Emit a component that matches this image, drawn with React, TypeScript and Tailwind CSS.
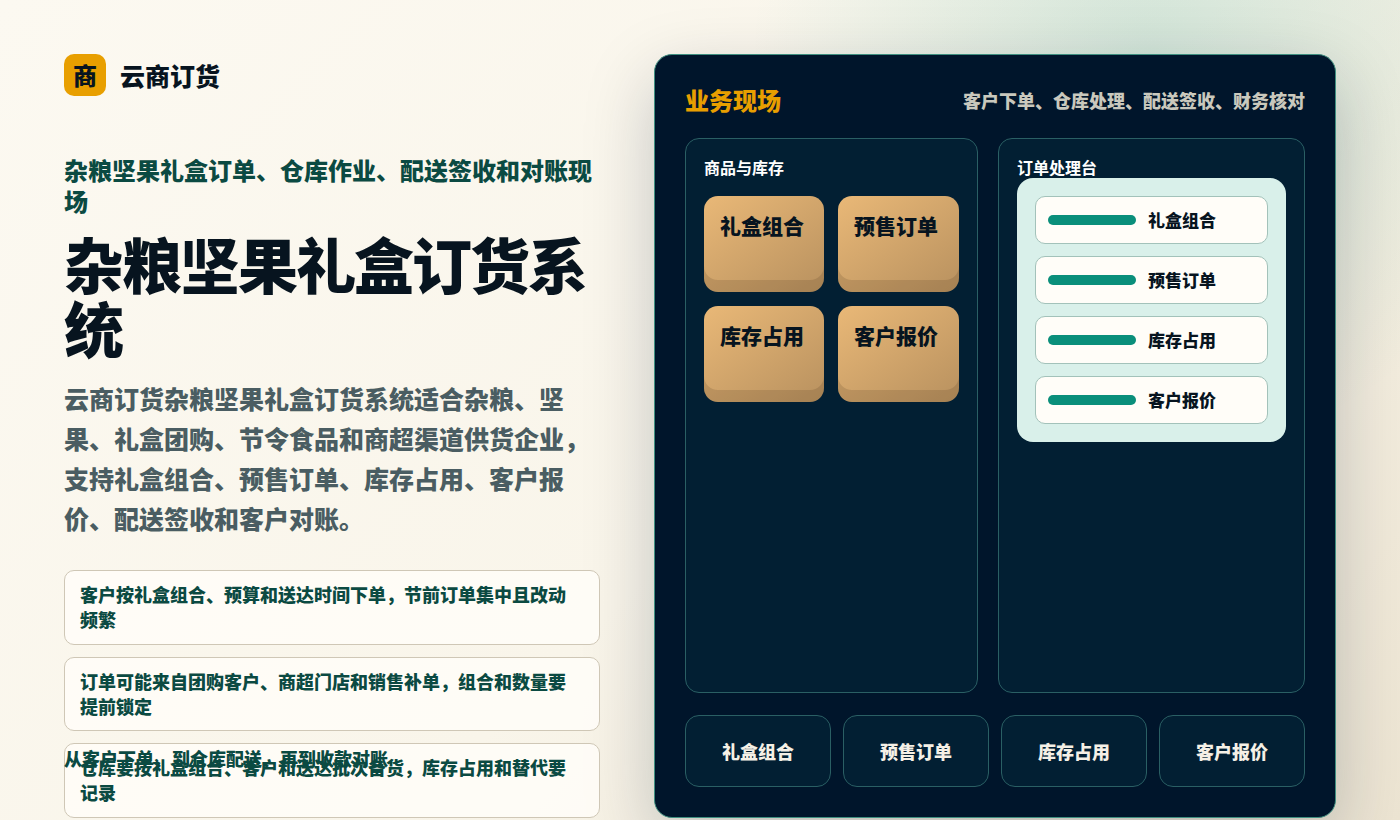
const ITEMS = ['礼盒组合', '预售订单', '库存占用', '客户报价']

const NOTES = [
  '客户按礼盒组合、预算和送达时间下单，节前订单集中且改动频繁',
  '订单可能来自团购客户、商超门店和销售补单，组合和数量要提前锁定',
  '仓库要按礼盒组合、客户和送达批次备货，库存占用和替代要记录',
]

const FONT = "font-['Noto_Sans_CJK_SC',sans-serif]"

function Brand() {
  return (
    <div className="flex items-center gap-[14px] h-[42px]">
      <div className="w-[42px] h-[42px] rounded-[10px] bg-[#e89f00] flex items-center justify-center text-[24px] font-black text-[#07141f]">
        商
      </div>
      <span className="mt-[2px] text-[25px] font-black text-[#07141f]">云商订货</span>
    </div>
  )
}

function Tile({ label }: { label: string }) {
  return (
    <div className="h-[96px] rounded-[14px] px-4 pt-[13px] text-[21px] leading-[32px] font-black text-[#07141f] bg-[linear-gradient(145deg,#e9b877,#b8915f)] shadow-[inset_0_-12px_0_rgba(60,40,20,0.15)]">
      {label}
    </div>
  )
}

function QueueRow({ label }: { label: string }) {
  return (
    <div className="h-[48px] rounded-[10px] border border-[#a3c2ba] bg-[#fffdf8] flex items-center gap-3 px-3">
      <div className="w-[88px] h-[10px] rounded-full bg-[#0a8f7b]" />
      <span className="text-[17px] font-black text-[#07141f]">{label}</span>
    </div>
  )
}

export default function App() {
  return (
    <div className={`${FONT} h-[820px] overflow-hidden flex pl-16 pr-16 pt-[54px] bg-[radial-gradient(circle_at_1150px_60px,rgba(10,143,123,0.17),transparent_400px),linear-gradient(135deg,#fcf9f1_0%,#f9f5ea_55%,#ece4d2_100%)]`}>
      <section className="relative w-[536px] shrink-0">
        <Brand />
        <p className="mt-[58px] text-[24px] leading-[31px] font-black text-[#0b4a42]">
          杂粮坚果礼盒订单、仓库作业、配送签收和对账现场
        </p>
        <h1 className="mt-[15px] text-[60px] leading-[64px] tracking-[-2px] font-black text-[#07141f]">杂粮坚果礼盒订货系统</h1>
        <p className="mt-[19px] text-[25px] leading-[40px] font-black text-[#4a5d62]">
          云商订货杂粮坚果礼盒订货系统适合杂粮、坚果、礼盒团购、节令食品和商超渠道供货企业，支持礼盒组合、预售订单、库存占用、客户报价、配送签收和客户对账。
        </p>
        <div className="mt-[32px] flex flex-col gap-3">
          {NOTES.map(note => (
            <div key={note} className="h-[74.5px] rounded-[10px] border border-[#cfc7b6] bg-[#fffdf8]/85 pl-[15px] pr-[17px] py-[11px] text-[18px] leading-[25px] font-black text-[#0b4a42]">
              {note}
            </div>
          ))}
        </div>
        <p className="absolute left-0 top-[692px] text-[18px] leading-[25px] font-black text-[#0b4a42]">
          从客户下单、到仓库配送、再到收款对账
        </p>
      </section>

      <section className="ml-[54px] w-[682px] h-[764px] shrink-0 rounded-[18px] border border-[#3f8f80] bg-[#00152b] px-[30px] pt-[30px] flex flex-col shadow-[0_24px_70px_rgba(0,24,45,0.22)]">
        <header className="flex items-center justify-between h-[30px]">
          <span className="text-[24px] font-black text-[#e89f00]">业务现场</span>
          <span className="text-[18px] font-black text-[#c9c8bd]">客户下单、仓库处理、配送签收、财务核对</span>
        </header>

        <div className="mt-[23px] h-[555px] grid grid-cols-[293px_307px] gap-5">
          <div className="rounded-[14px] border border-[#2a5f64] bg-[#021f33] p-[18px]">
            <h3 className="text-[16px] leading-[21px] font-bold text-white">商品与库存</h3>
            <div className="mt-[18px] grid grid-cols-[120px_121px] gap-[14px]">
              {ITEMS.map(item => <Tile key={item} label={item} />)}
            </div>
          </div>
          <div className="rounded-[14px] border border-[#2a5f64] bg-[#021f33] p-[18px]">
            <h3 className="text-[16px] leading-[21px] font-bold text-white">订单处理台</h3>
            <div className="w-[269px] rounded-[16px] bg-[#d9f0ea] p-[18px] flex flex-col gap-3">
              {ITEMS.map(item => <QueueRow key={item} label={item} />)}
            </div>
          </div>
        </div>

        <div className="mt-[22px] grid grid-cols-4 gap-3">
          {ITEMS.map(item => (
            <div key={item} className="h-[72px] rounded-[14px] border border-[#2a5f64] bg-[#021f33] flex items-center justify-center text-[18px] font-black text-[#f5f0e6]">
              {item}
            </div>
          ))}
        </div>
      </section>
    </div>
  )
}
